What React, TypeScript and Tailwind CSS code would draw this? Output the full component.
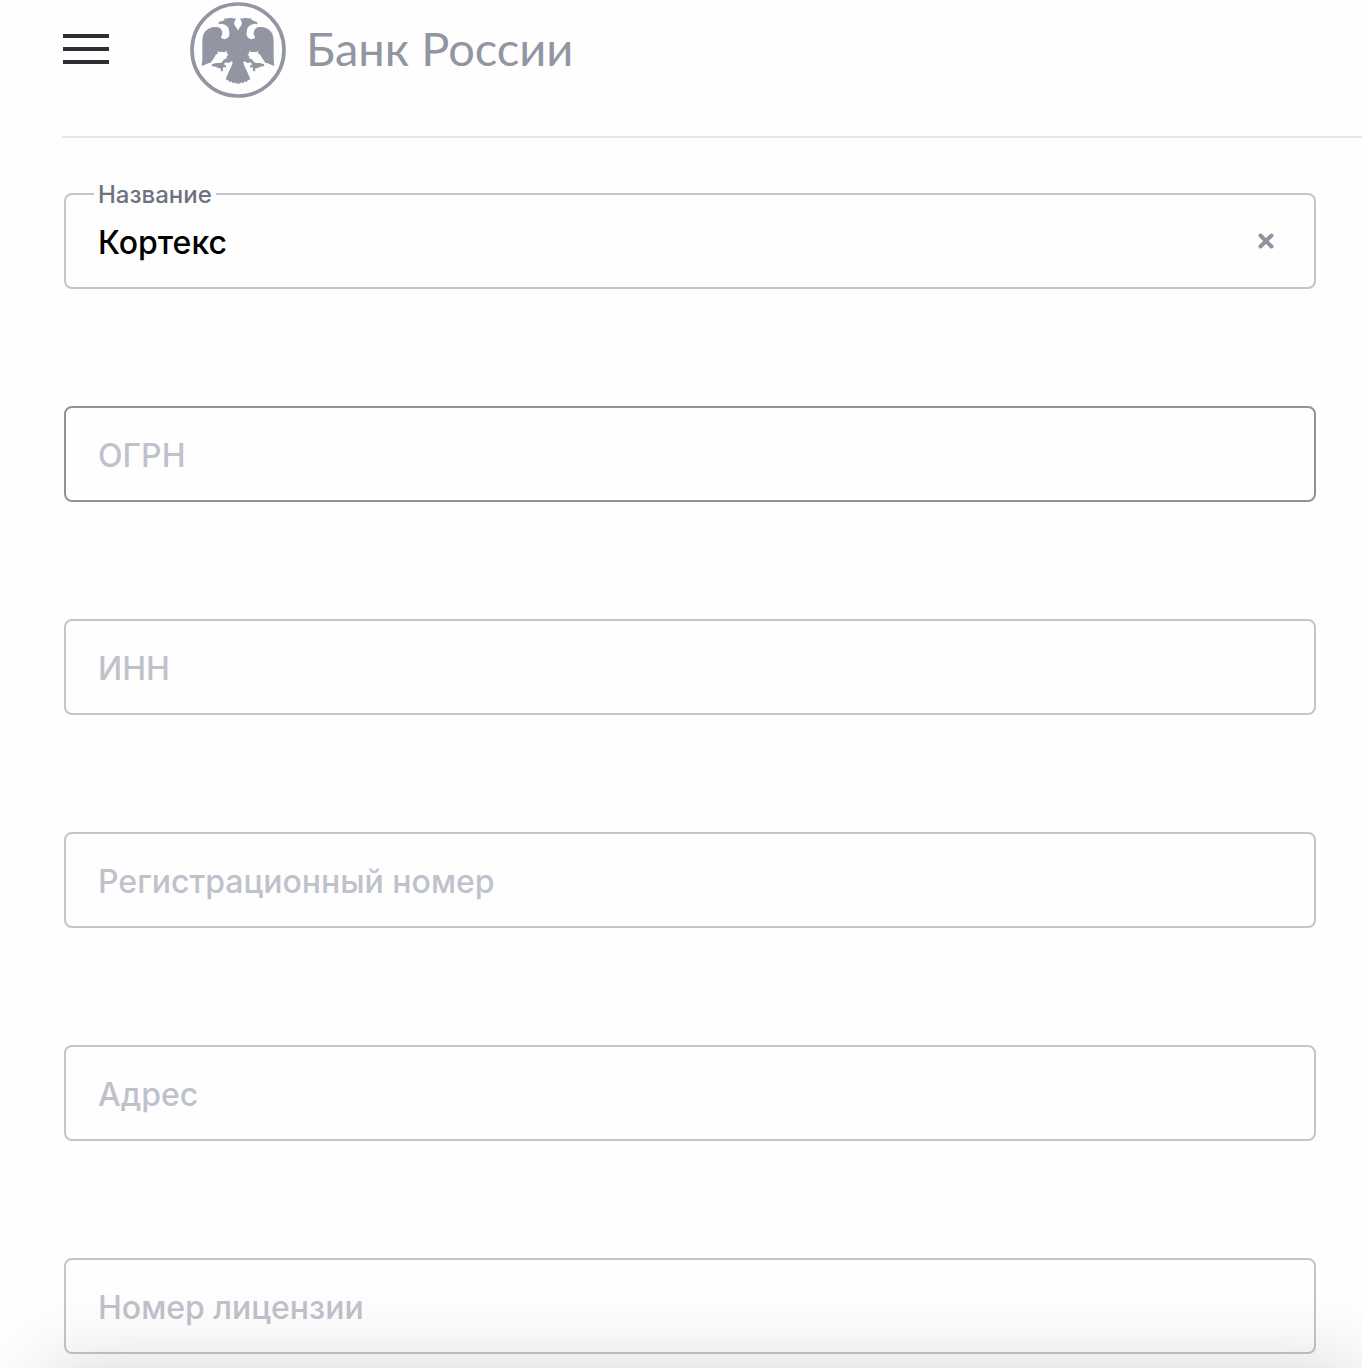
import React, { useState } from 'react';

interface Field {
  id: string;
  label: string;
  active?: boolean;
}

const fields: Field[] = [
  { id: 'name', label: 'Название' },
  { id: 'ogrn', label: 'ОГРН', active: true },
  { id: 'inn', label: 'ИНН' },
  { id: 'regNumber', label: 'Регистрационный номер' },
  { id: 'address', label: 'Адрес' },
  { id: 'license', label: 'Номер лицензии' },
];

// left half of the eagle, the right one is its mirror
const EAGLE_HALF =
  'M175 92 L173 90 C171 84 166 79 163 74 C161 69 164 64 166 60 L168 55 C162 57 157 54 150 54 L132 56 L134 60 C127 63 119 64 115 68 L117 73 C123 69 130 73 136 75 C144 79 147 86 147 92 C149 99 149 106 145 112 C140 118 131 119 125 115 C121 112 124 109 126 106 C129 96 125 86 115 82 C101 78 85 83 76 94 C69 103 67 113 67 125 L67 178 L65 198 C73 195 83 189 92 188 C96 181 101 177 104 170 L108 163 L114 161 L113 153 L120 157 L126 155 L132 157 L141 153 L140 160 L146 164 L140 168 L141 174 L131 179 L126 187 L119 189 L108 189 L96 193 L95 199 L101 199 L108 201 L114 200 L109 205 L119 204 L123 208 L122 214 L129 213 L129 204 L132 201 L139 203 L137 196 L131 193 L137 187 L145 189 L155 184 L158 187 C157 195 151 205 147 214 L138 235 C138 241 141 242 145 240 C146 246 150 247 154 244 C156 250 161 250 164 247 C167 252 172 252 175 248 Z';

const EagleLogo = () => (
  <svg viewBox="30 6 288 288" className="size-24 shrink-0" aria-hidden="true">
    <circle cx="174" cy="150" r="138" fill="none" stroke="#9196a2" strokeWidth="11" />
    <g fill="#9196a2">
      <path d={EAGLE_HALF} />
      <path d={EAGLE_HALF} transform="translate(348 0) scale(-1 1)" />
    </g>
  </svg>
);

const Header = () => (
  <header className="ml-[62px] flex items-center border-b-2 border-[#e6e6e7] pt-0.5 pb-[38px]">
    <button type="button" aria-label="Меню" className="flex w-12 flex-col gap-[9px] px-px pb-0.5">
      <span className="h-1 w-full bg-[#2b2e33]" />
      <span className="h-1 w-full bg-[#2b2e33]" />
      <span className="h-1 w-full bg-[#2b2e33]" />
    </button>
    <a href="#" className="ml-20 flex items-center gap-5 text-[#9196a2]">
      <EagleLogo />
      <span className="pb-1 font-['Lato','Open_Sans',sans-serif] text-[47px]">Банк России</span>
    </a>
  </header>
);

interface TextFieldProps {
  field: Field;
  value: string;
  onChange: (value: string) => void;
}

const TextField: React.FC<TextFieldProps> = ({ field, value, onChange }) => {
  const filled = value.length > 0;

  return (
    <div
      className={`relative flex h-24 items-center rounded-lg border-2 px-8 ${
        field.active ? 'border-[#8f929a]' : 'border-[#c4c5c8]'
      }`}
    >
      {filled && (
        <label
          htmlFor={field.id}
          className="absolute -top-4 left-7 bg-[#fefefe] px-1 text-2xl leading-8 font-medium text-[#6e7280]"
        >
          {field.label}
        </label>
      )}
      <input
        id={field.id}
        type="text"
        value={value}
        placeholder={field.label}
        aria-label={field.label}
        onChange={(e) => onChange(e.target.value)}
        className="h-16 min-w-0 flex-1 bg-transparent pt-[3px] text-[32px] font-medium text-black outline-none placeholder:text-[#bfc2cb]"
      />
      {filled && (
        <button type="button" aria-label="Очистить" className="p-2" onClick={() => onChange('')}>
          <svg viewBox="0 0 16 16" className="size-4" fill="none" stroke="#8e93a0" strokeWidth="4" strokeLinecap="round">
            <path d="M2.5 2.5 L13.5 13.5 M13.5 2.5 L2.5 13.5" />
          </svg>
        </button>
      )}
    </div>
  );
};

export default function App() {
  const [values, setValues] = useState<Record<string, string>>({ name: 'Кортекс' });

  return (
    <div className="min-h-screen bg-[#fefefe] font-['Inter','Noto_Sans',sans-serif]">
      <Header />
      <form className="flex flex-col gap-[117px] pt-[55px] pr-[46px] pl-16">
        {fields.map((field) => (
          <TextField
            key={field.id}
            field={field}
            value={values[field.id] ?? ''}
            onChange={(value) => setValues({ ...values, [field.id]: value })}
          />
        ))}
      </form>
      {/* shadow of the panel docked under the viewport */}
      <div className="pointer-events-none fixed top-full right-0 left-12 h-40 shadow-[0_0_80px_rgba(0,0,0,0.16)]" />
    </div>
  );
}
